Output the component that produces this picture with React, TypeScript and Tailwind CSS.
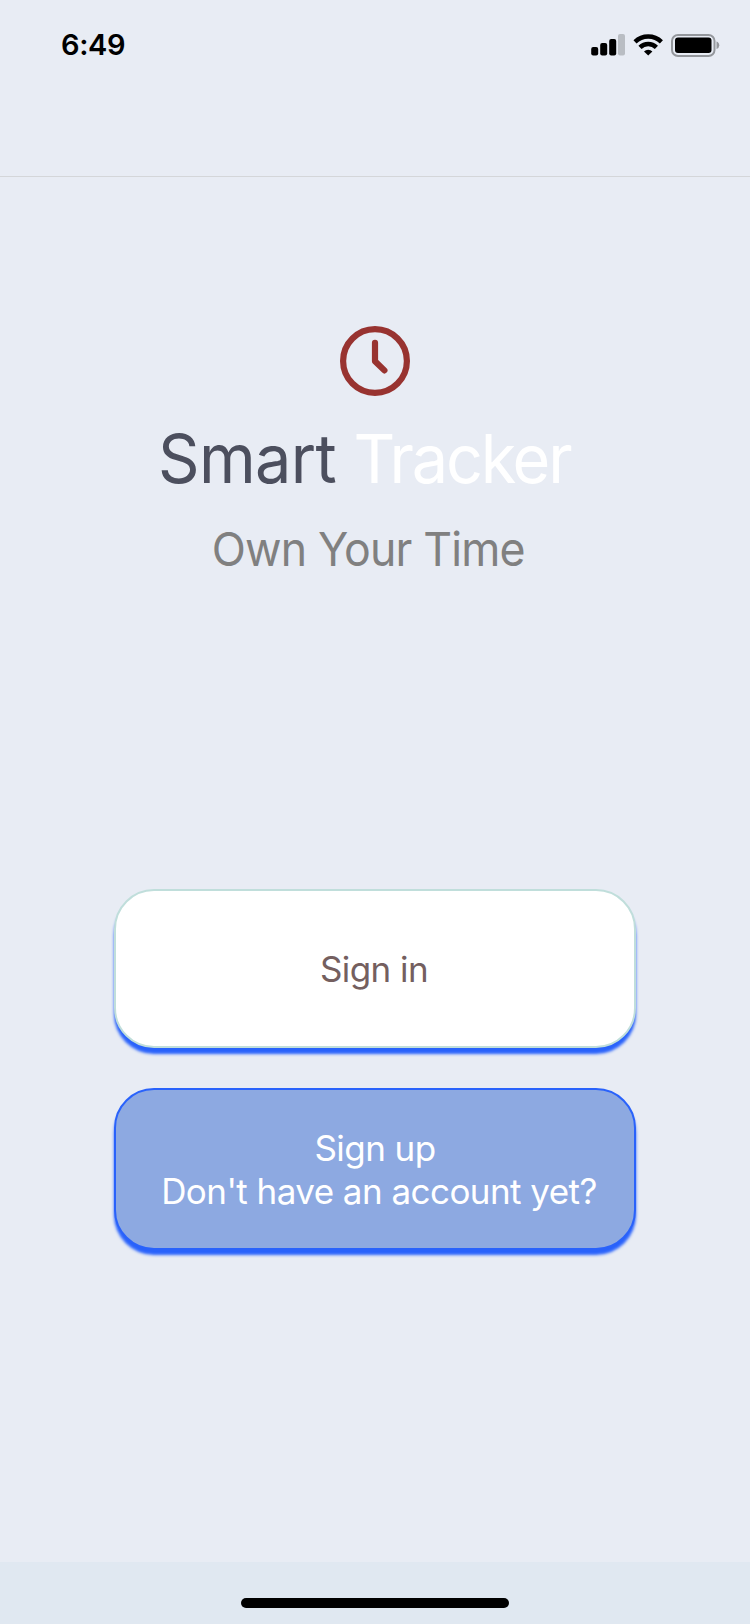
function StatusBar() {
  return (
    <div className="flex h-[90px] items-start justify-between pl-[61px] pr-[30px] pt-[26px]">
      <div className="text-[29px] font-semibold leading-[38px] tracking-[-0.4px] text-black">6:49</div>
      <div className="flex pt-[8px]">
        <svg width="129" height="23" viewBox="0 0 129 23">
          <rect x="0.2" y="13" width="7" height="8.5" rx="2" />
          <rect x="9.2" y="9" width="7" height="12.5" rx="2" />
          <rect x="18.2" y="5" width="7" height="16.5" rx="2" />
          <rect x="27" y="0" width="7" height="21.5" rx="2" fill="#b9bdc3" />
          <g fill="none" stroke="#000" strokeWidth="4.4">
            <path d="M44 7.8 a19 19 0 0 1 26.4 0" />
            <path d="M49 13.4 a11.5 11.5 0 0 1 16.4 0" />
          </g>
          <path d="M53 17.4 a6 6 0 0 1 8.4 0 L57.2 21.6 Z" />
          <rect x="81" y="1" width="42.5" height="21" rx="6" fill="none" stroke="#94979c" strokeWidth="2" />
          <rect x="84" y="3.5" width="36.5" height="15.5" rx="3" />
          <path d="M125.5 7.5 a4 4 0 0 1 0 7.6 Z" fill="#94979c" />
        </svg>
      </div>
    </div>
  );
}

export default function App() {
  return (
    <div className="flex h-[1624px] w-[750px] flex-col bg-[#e8ecf4] font-['Inter',sans-serif]">
      <header className="h-[177px] border-b border-[#d4d6d9]">
        <StatusBar />
      </header>
      <main className="flex flex-1 flex-col items-center">
        <svg className="mt-[149px]" width="70" height="70" viewBox="0 0 70 70" fill="none" stroke="#983330" strokeWidth="6.2" strokeLinecap="round" strokeLinejoin="round">
          <circle cx="35" cy="35" r="31.9" />
          <path d="M35 16.8v18.4l9.4 9.2" />
        </svg>
        <h1 className="mt-[21px] scale-x-[0.96] whitespace-pre pr-[22px] text-[67.5px] leading-[84px] tracking-[-0.7px] text-[#4c4f5e]">
          Smart <span className="tracking-[-2.3px] text-white">Tracker</span>
        </h1>
        <p className="mt-[20px] scale-x-[0.96] pr-[14px] text-[46.5px] leading-[56px] tracking-[-0.87px] text-[#808080]">Own Your Time</p>
        <button className="mt-[312px] flex h-[159px] w-[522px] items-center justify-center rounded-[40px] border-2 border-[#c0dedb] bg-white pr-[2px] pt-[2px] text-[35px] leading-[43px] tracking-[-0.55px] text-[#745f5f] shadow-[0_6px_3px_#2962fb]">
          Sign in
        </button>
        <button className="mt-[40px] flex h-[162px] w-[522px] flex-col items-center justify-center rounded-[40px] border-2 border-[#2962fb] bg-[#8da9e1] pt-[2px] text-[35px] leading-[43px] tracking-[-0.55px] text-white shadow-[0_5px_3px_#2962fb]">
          <span>Sign up</span>
          <span className="whitespace-pre pl-[8px]">Don't have an account yet?</span>
        </button>
      </main>
      <footer className="flex h-[62px] justify-center bg-[#e0e8f1] pt-[36px]">
        <div className="h-[10px] w-[268px] rounded-full bg-black" />
      </footer>
    </div>
  );
}
